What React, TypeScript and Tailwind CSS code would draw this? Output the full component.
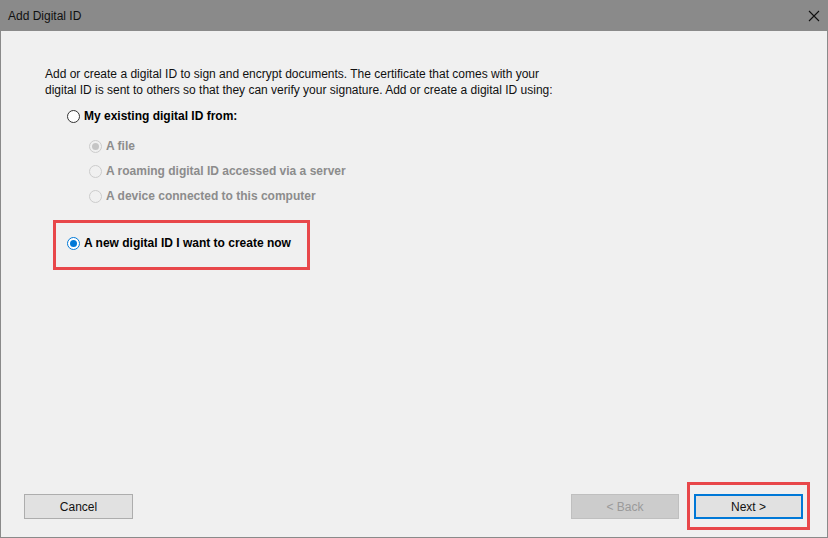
import React from "react";

function Radio({ checked, disabled }: { checked?: boolean; disabled?: boolean }) {
  if (checked && !disabled) {
    return (
      <span className="w-[13px] h-[13px] rounded-full border border-[#0078d7] bg-white flex items-center justify-center shrink-0">
        <span className="w-[7px] h-[7px] rounded-full bg-[#0078d7]" />
      </span>
    );
  }
  if (checked && disabled) {
    return (
      <span className="w-[13px] h-[13px] rounded-full border border-[#cccccc] bg-[#f0f0f0] flex items-center justify-center shrink-0">
        <span className="w-[7px] h-[7px] rounded-full bg-[#c5c5c5]" />
      </span>
    );
  }
  if (disabled) {
    return <span className="w-[13px] h-[13px] rounded-full border border-[#cccccc] bg-[#f0f0f0] shrink-0" />;
  }
  return <span className="w-[13px] h-[13px] rounded-full border border-[#333333] bg-white shrink-0" />;
}

export default function App() {
  return (
    <div
      className="w-[828px] h-[538px] flex flex-col bg-[#f0f0f0] border border-t-0 border-[#8a8a8a] text-[12px] text-black"
      style={{ fontFamily: '"Liberation Sans", Arial, sans-serif' }}
    >
      <div className="h-[31px] bg-[#8a8a8a] flex items-center justify-between pl-[8px] pr-[6px] shrink-0 -mx-px">
        <span className="text-[12px] text-[#111]">Add Digital ID</span>
        <svg width="12" height="12" viewBox="0 0 12 12" className="mr-[2px]">
          <path d="M1 1 L11 11 M11 1 L1 11" stroke="#111" strokeWidth="1.1" />
        </svg>
      </div>
      <div className="flex-1 flex flex-col pl-[44px] pt-[35px]">
        <p className="leading-[16px] text-[#111]">
          Add or create a digital ID to sign and encrypt documents. The certificate that comes with your
          <br />
          digital ID is sent to others so that they can verify your signature. Add or create a digital ID using:
        </p>
        <div className="flex items-center gap-[4px] ml-[22px] mt-[10px] h-[16px]">
          <Radio />
          <span className="font-bold">My existing digital ID from:</span>
        </div>
        <div className="flex flex-col ml-[44px] mt-[14px] gap-[9px] text-[#8c8c8c] font-bold">
          <div className="flex items-center gap-[4px] h-[16px]">
            <Radio checked disabled />
            <span>A file</span>
          </div>
          <div className="flex items-center gap-[4px] h-[16px]">
            <Radio disabled />
            <span>A roaming digital ID accessed via a server</span>
          </div>
          <div className="flex items-center gap-[4px] h-[16px]">
            <Radio disabled />
            <span>A device connected to this computer</span>
          </div>
        </div>
        <div className="ml-[8px] mt-[16px] w-[257px] h-[50px] border-[3px] border-[#e8474a] flex items-center pl-[11px] pb-[4px]">
          <div className="flex items-center gap-[4px]">
            <Radio checked />
            <span className="font-bold">A new digital ID I want to create now</span>
          </div>
        </div>
      </div>
      <div className="h-[52px] flex items-start justify-between pl-[23px] pr-[17px] shrink-0">
        <button className="mt-[9px] w-[109px] h-[25px] bg-[#e1e1e1] border border-[#adadad] text-[12px] text-[#111]">
          Cancel
        </button>
        <div className="flex items-start">
          <button className="mt-[9px] w-[108px] h-[25px] bg-[#cccccc] border border-[#bfbfbf] text-[12px] text-[#9a9a9a]">
            &lt; Back
          </button>
          <div className="ml-[8px] -mt-[3px] w-[123px] h-[48px] border-[3px] border-[#e8474a] flex items-start justify-center pt-[9px]">
            <button className="w-[109px] h-[25px] bg-[#e1e1e1] border-2 border-[#0078d7] text-[12px] text-[#111]">
              Next &gt;
            </button>
          </div>
        </div>
      </div>
    </div>
  );
}
